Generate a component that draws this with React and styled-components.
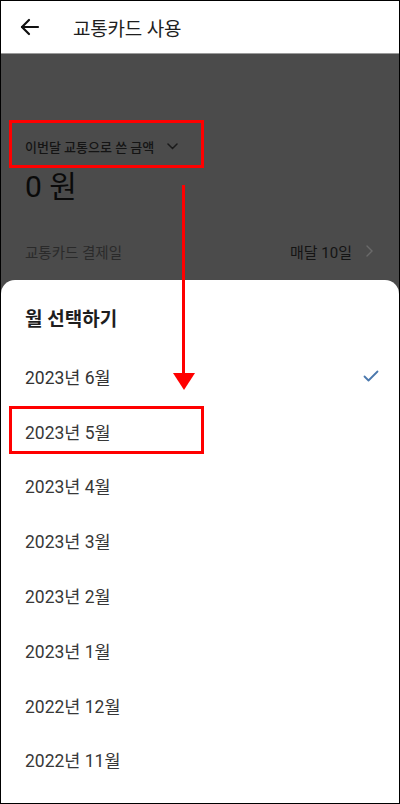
import React from 'react'
import styled, { createGlobalStyle } from 'styled-components'

const GlobalStyle = createGlobalStyle`
  * { box-sizing: border-box; }
  body {
    margin: 0;
    font-family: Roboto, "Noto Sans CJK KR", sans-serif;
    background: #fff;
  }
`

const Screen = styled.div`
  position: relative;
  width: 400px;
  height: 804px;
  border: 1px solid #000;
  overflow: hidden;
  display: flex;
  flex-direction: column;
  background: #4b4b4b;
`

const Header = styled.header`
  height: 53px;
  flex-shrink: 0;
  background: #fff;
  border-bottom: 1px solid #9a9a9a;
  display: flex;
  align-items: center;
  padding-left: 19px;
  gap: 33px;
`

const Title = styled.h1`
  margin: 0;
  font-size: 19px;
  font-weight: 400;
  color: #1e1e1e;
  letter-spacing: -0.2px;
`

const Dimmed = styled.section`
  padding: 82px 24px 0 24px;
  height: 226px;
  flex-shrink: 0;
`

const Label = styled.div`
  display: flex;
  align-items: center;
  gap: 13px;
  height: 20px;
  font-size: 13px;
  font-weight: 500;
  color: #141414;
`

const Amount = styled.div`
  margin-top: 14px;
  font-size: 30px;
  line-height: 34px;
  color: #0a0a0a;
`

const PayRow = styled.div`
  margin-top: 37px;
  display: flex;
  align-items: center;
  justify-content: space-between;
  height: 20px;
  font-size: 14.5px;
  color: #2a2a2a;
`

const PayValue = styled.div`
  display: flex;
  align-items: center;
  gap: 14px;
  font-size: 15px;
  color: #141414;
  padding-right: 2px;
`

const Sheet = styled.section`
  flex: 1;
  background: #fff;
  border-radius: 14px 14px 0 0;
  padding: 28px 20px 0 24px;
`

const SheetTitle = styled.h2`
  margin: 0 0 17px 0;
  font-size: 19px;
  line-height: 24px;
  font-weight: 700;
  color: #1e1e1e;
`

const MonthRow = styled.div`
  height: 54.8px;
  display: flex;
  align-items: center;
  justify-content: space-between;
  font-size: 17.5px;
  color: ${({ selected }) => (selected ? '#333' : '#383838')};
`

const Annotation = styled.div`
  position: absolute;
  left: 8px;
  width: 195px;
  height: 48px;
  top: ${({ top }) => top}px;
  border: 3px solid #f00;
`

const ArrowLine = styled.div`
  position: absolute;
  left: 181px;
  top: 184px;
  width: 3px;
  height: 190px;
  background: #f00;
`

const ArrowHead = styled.div`
  position: absolute;
  left: 172px;
  top: 372px;
  width: 0;
  height: 0;
  border-left: 11px solid transparent;
  border-right: 11px solid transparent;
  border-top: 17px solid #f00;
`

const months = [
  '2023년 6월',
  '2023년 5월',
  '2023년 4월',
  '2023년 3월',
  '2023년 2월',
  '2023년 1월',
  '2022년 12월',
  '2022년 11월',
]

const App = () => {
  return (
    <>
      <GlobalStyle />
      <Screen>
        <Header>
          <svg width="20" height="18" viewBox="0 0 20 18" fill="none" stroke="#111" strokeWidth="2.2" strokeLinecap="round" strokeLinejoin="round">
            <path d="M18 9H2" />
            <path d="M9 2L2 9l7 7" />
          </svg>
          <Title>교통카드 사용</Title>
        </Header>

        <Dimmed>
          <Label>
            이번달 교통으로 쓴 금액
            <svg width="11" height="7" viewBox="0 0 11 7" fill="none" stroke="#1a1a1a" strokeWidth="1.5" strokeLinecap="round">
              <path d="M1 1l4.5 4.5L10 1" />
            </svg>
          </Label>
          <Amount>0 원</Amount>
          <PayRow>
            교통카드 결제일
            <PayValue>
              매달 10일
              <svg width="7" height="12" viewBox="0 0 7 12" fill="none" stroke="#6a6a6a" strokeWidth="1.4" strokeLinecap="round">
                <path d="M1 1l5 5-5 5" />
              </svg>
            </PayValue>
          </PayRow>
        </Dimmed>

        <Sheet>
          <SheetTitle>월 선택하기</SheetTitle>
          {months.map((m, i) => (
            <MonthRow key={m} selected={i === 0}>
              {m}
              {i === 0 && (
                <svg width="16" height="12" viewBox="0 0 16 12" fill="none" stroke="#4a78ad" strokeWidth="1.8" strokeLinecap="round" strokeLinejoin="round">
                  <path d="M1.5 6.5l4 4L14.5 1.5" />
                </svg>
              )}
            </MonthRow>
          ))}
        </Sheet>

        <Annotation top={119} />
        <Annotation top={405} />
        <ArrowLine />
        <ArrowHead />
      </Screen>
    </>
  )
}

export default App
